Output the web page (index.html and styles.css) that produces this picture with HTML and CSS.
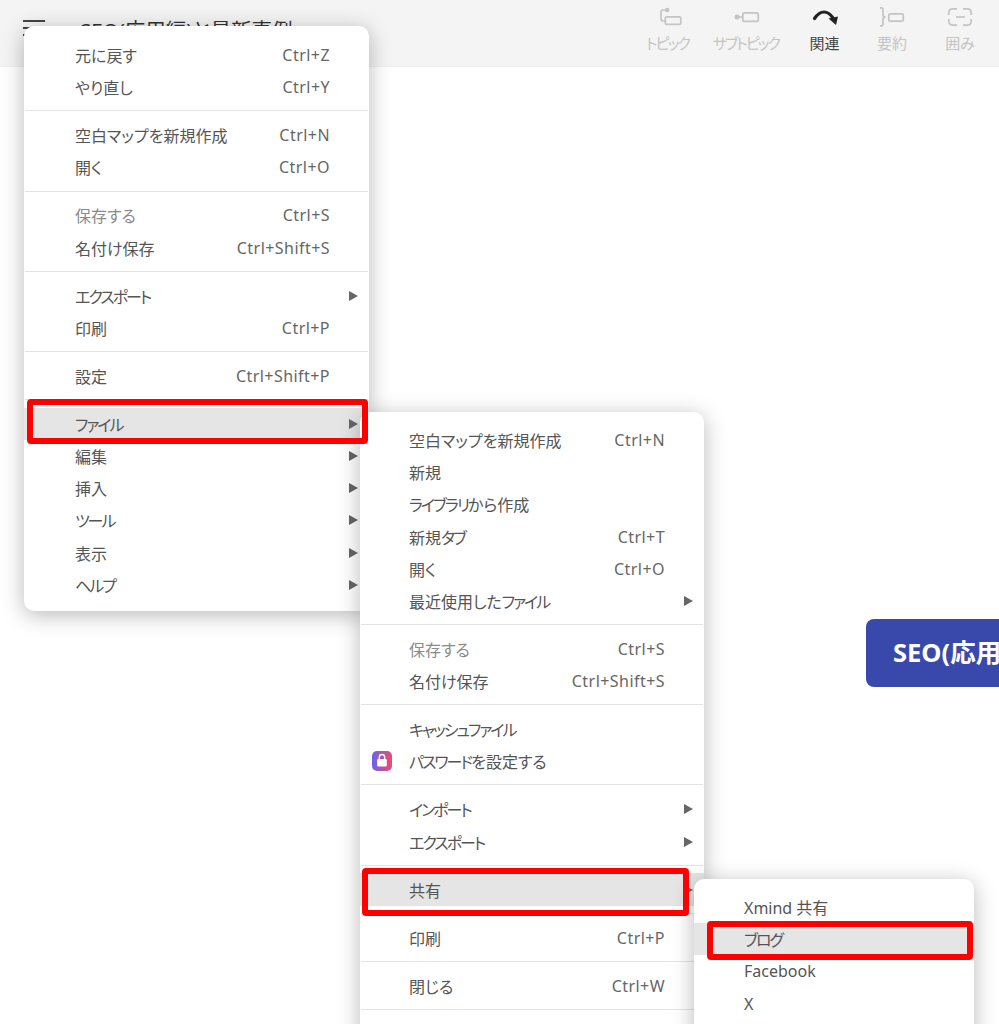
FILE: index.html
```html
<!DOCTYPE html>
<html lang="ja">
<head>
    <meta charset="UTF-8">
    <meta name="viewport" content="width=device-width, initial-scale=1.0">
    <title>SEO(応用編)と最新事例</title>
    <link rel="stylesheet" href="styles.css">
</head>
<body>

<header class="toolbar">
    <div class="doc">
        <div class="burger"><span></span><span></span><span></span></div>
        <div class="doc-title">SEO(応用編)と最新事例</div>
    </div>
    <div class="tools">
        <div class="tool">
            <svg width="28" height="24" viewBox="0 0 28 24" fill="none" stroke="#c4c4c4" stroke-width="1.7">
                <circle cx="13.2" cy="4" r="2.3" fill="#c4c4c4" stroke="none"/>
                <path d="M12 4H9Q7 4 7 6V13Q7 15 9 15H11"/>
                <rect x="11.3" y="10.8" width="15.5" height="7.6" rx="1.5"/>
            </svg>
            <span class="kana">トピック</span>
        </div>
        <div class="tool">
            <svg width="30" height="24" viewBox="0 0 30 24" fill="none" stroke="#c4c4c4" stroke-width="1.7">
                <circle cx="6" cy="11" r="2.5" fill="#c4c4c4" stroke="none"/>
                <path d="M6 11H11"/>
                <rect x="11.8" y="6.8" width="15.5" height="8.6" rx="2"/>
            </svg>
            <span class="kana">サブトピック</span>
        </div>
        <div class="tool active">
            <svg width="30" height="24" viewBox="0 0 30 24" fill="none" stroke="#222" stroke-width="3.2" stroke-linecap="round">
                <path d="M4.5 12.5Q9 6 14 6Q19 6 23 12"/>
                <path d="M18.5 12.5L28 10.5L26 19Z" fill="#222" stroke="none"/>
            </svg>
            <span>関連</span>
        </div>
        <div class="tool">
            <svg width="30" height="24" viewBox="0 0 30 24" fill="none" stroke="#c4c4c4" stroke-width="1.7">
                <path d="M3 1.8H4.5Q6 1.8 6 3.8V9Q6 11 8.5 11.2Q6 11.4 6 13.4V17.8Q6 19.8 4.5 19.8H3"/>
                <rect x="11.8" y="7.8" width="14.5" height="7.4" rx="1.5"/>
            </svg>
            <span>要約</span>
        </div>
        <div class="tool">
            <svg width="26" height="24" viewBox="0 0 26 24" fill="none" stroke="#c4c4c4" stroke-width="1.7">
                <path d="M10 2.8H6Q1.8 2.8 1.8 7V9M16 2.8H20Q24.2 2.8 24.2 7V9M10 19.2H6Q1.8 19.2 1.8 15V13M16 19.2H20Q24.2 19.2 24.2 15V13"/>
                <path d="M9 11H18"/>
            </svg>
            <span>囲み</span>
        </div>
    </div>
</header>

<main class="canvas">
    <div class="node">SEO(応用編)と最新事例</div>
</main>

<nav class="menu menu-main">
    <div class="row"><span>元に戻す</span><kbd>Ctrl+Z</kbd></div>
    <div class="row"><span>やり直し</span><kbd>Ctrl+Y</kbd></div>
    <hr>
    <div class="row"><span>空白マップを新規作成</span><kbd>Ctrl+N</kbd></div>
    <div class="row"><span>開く</span><kbd>Ctrl+O</kbd></div>
    <hr>
    <div class="row disabled"><span>保存する</span><kbd>Ctrl+S</kbd></div>
    <div class="row"><span>名付け保存</span><kbd>Ctrl+Shift+S</kbd></div>
    <hr>
    <div class="row sub"><span class="kana">エクスポート</span><i class="arrow"></i></div>
    <div class="row"><span>印刷</span><kbd>Ctrl+P</kbd></div>
    <hr>
    <div class="row"><span>設定</span><kbd>Ctrl+Shift+P</kbd></div>
    <hr>
    <div class="row sub on"><span class="kana">ファイル</span><i class="arrow"></i></div>
    <div class="row sub"><span>編集</span><i class="arrow"></i></div>
    <div class="row sub"><span>挿入</span><i class="arrow"></i></div>
    <div class="row sub"><span class="kana">ツール</span><i class="arrow"></i></div>
    <div class="row sub"><span>表示</span><i class="arrow"></i></div>
    <div class="row sub"><span class="kana">ヘルプ</span><i class="arrow"></i></div>
</nav>

<nav class="menu menu-file">
    <div class="row"><span>空白マップを新規作成</span><kbd>Ctrl+N</kbd></div>
    <div class="row"><span>新規</span></div>
    <div class="row"><span><span class="kana">ライブラリ</span>から作成</span></div>
    <div class="row"><span>新規<span class="kana">タブ</span></span><kbd>Ctrl+T</kbd></div>
    <div class="row"><span>開く</span><kbd>Ctrl+O</kbd></div>
    <div class="row sub"><span>最近使用した<span class="kana">ファイル</span></span><i class="arrow"></i></div>
    <hr>
    <div class="row disabled"><span>保存する</span><kbd>Ctrl+S</kbd></div>
    <div class="row"><span>名付け保存</span><kbd>Ctrl+Shift+S</kbd></div>
    <hr>
    <div class="row"><span class="kana">キャッシュファイル</span></div>
    <div class="row">
        <svg class="lock" width="20" height="20" viewBox="0 0 20 20">
            <defs>
                <linearGradient id="lockBg" x1="0" y1="0" x2="1" y2="0">
                    <stop offset="0" stop-color="#6a63ea"/>
                    <stop offset="1" stop-color="#f4486a"/>
                </linearGradient>
            </defs>
            <rect width="20" height="20" rx="5" fill="url(#lockBg)"/>
            <rect x="5.2" y="8" width="9.6" height="7.5" rx="1.2" fill="#fff"/>
            <path d="M7.3 8.5V6.2a2.7 2.7 0 0 1 5.4 0v2.3" fill="none" stroke="#fff" stroke-width="1.4"/>
        </svg>
        <span><span class="kana">パスワード</span>を設定する</span>
    </div>
    <hr>
    <div class="row sub"><span class="kana">インポート</span><i class="arrow"></i></div>
    <div class="row sub"><span class="kana">エクスポート</span><i class="arrow"></i></div>
    <hr>
    <div class="row sub on"><span>共有</span><i class="arrow"></i></div>
    <hr>
    <div class="row"><span>印刷</span><kbd>Ctrl+P</kbd></div>
    <hr>
    <div class="row"><span>閉じる</span><kbd>Ctrl+W</kbd></div>
    <hr>
</nav>

<nav class="menu menu-share">
    <div class="row"><span>Xmind 共有</span></div>
    <div class="row on"><span class="kana">ブログ</span></div>
    <div class="row"><span>Facebook</span></div>
    <div class="row"><span>X</span></div>
</nav>

<!-- 赤枠 -->
<div class="mark mark-file"></div>
<div class="mark mark-share"></div>
<div class="mark mark-blog"></div>

</body>
</html>
```

FILE: styles.css
```css
* {
    margin: 0;
    padding: 0;
    box-sizing: border-box;
}

html, body {
    height: 1024px;
    overflow: hidden;
}

body {
    position: relative;
    background: #fff;
    color: #555;
    font-family: "Noto Sans", "Noto Sans CJK JP", sans-serif;
    font-size: 16px;
    font-feature-settings: "palt";
}

.kana {
    letter-spacing: -2px;
}

.toolbar {
    display: flex;
    justify-content: space-between;
    height: 67px;
    padding-right: 5px;
    background: #f4f4f4;
    border-bottom: 1px solid #eeeeee;
}

.doc {
    display: flex;
    gap: 35px;
    padding: 20px 0 0 23px;
}

.burger {
    display: flex;
    flex-direction: column;
    gap: 5px;
    width: 22px;
}

.burger span {
    height: 2px;
    background: #444;
}

.doc-title {
    color: #333;
    font-size: 20.5px;
    line-height: 20px;
}

.tools {
    display: grid;
    grid-template-columns: 67px 90px 67px 68px 68px;
    padding-top: 6px;
}

.tool {
    display: flex;
    flex-direction: column;
    align-items: center;
    height: 58px;
    color: #c4c4c4;
    font-size: 15px;
    line-height: 20px;
}

.tool svg {
    margin-bottom: 3px;
}

.tool.active {
    color: #444;
}

.node {
    position: absolute;
    top: 619px;
    left: 866px;
    width: 320px;
    height: 68px;
    padding-left: 27px;
    background: #3949ab;
    border-radius: 8px;
    color: #fff;
    font-size: 25.5px;
    font-weight: 700;
    line-height: 66px;
    white-space: nowrap;
}

.menu {
    position: absolute;
    background: #fff;
    border-radius: 10px;
    box-shadow: 0 4px 22px rgba(0, 0, 0, 0.28);
}

.menu-main {
    top: 26px;
    left: 24px;
    width: 345px;
    height: 585px;
    padding-top: 13px;
    --text-left: 51px;
}

.menu-file {
    top: 412px;
    left: 360px;
    width: 344px;
    height: 640px;
    padding-top: 12px;
    --text-left: 49px;
}

.menu-share {
    top: 879px;
    left: 694px;
    width: 280px;
    height: 200px;
    padding-top: 12px;
    --text-left: 50px;
}

.row {
    position: relative;
    display: flex;
    justify-content: space-between;
    align-items: center;
    height: 32.2px;
    padding: 0 39px 0 var(--text-left);
    white-space: nowrap;
}

.row.sub {
    padding-right: 11px;
}

.row.on {
    background: #e5e5e5;
}

.row.disabled {
    color: #8a8a8a;
}

kbd {
    color: #666;
    font-family: inherit;
    font-size: 16px;
    letter-spacing: 0.45px;
}

.arrow {
    width: 0;
    height: 0;
    border-left: 9px solid #666;
    border-top: 5px solid transparent;
    border-bottom: 5px solid transparent;
}

.lock {
    position: absolute;
    top: 6px;
    left: 12px;
}

hr {
    height: 1px;
    margin: 7px 1px 7.8px;
    background: #e2e2e8;
    border: none;
}

.mark {
    position: absolute;
    border: 6.5px solid #ff0000;
    border-radius: 4px;
}

.mark-file {
    top: 399px;
    left: 27px;
    width: 341px;
    height: 45px;
}

.mark-share {
    top: 868px;
    left: 362px;
    width: 327px;
    height: 48px;
}

.mark-blog {
    top: 921px;
    left: 707px;
    width: 266px;
    height: 39px;
}
```
